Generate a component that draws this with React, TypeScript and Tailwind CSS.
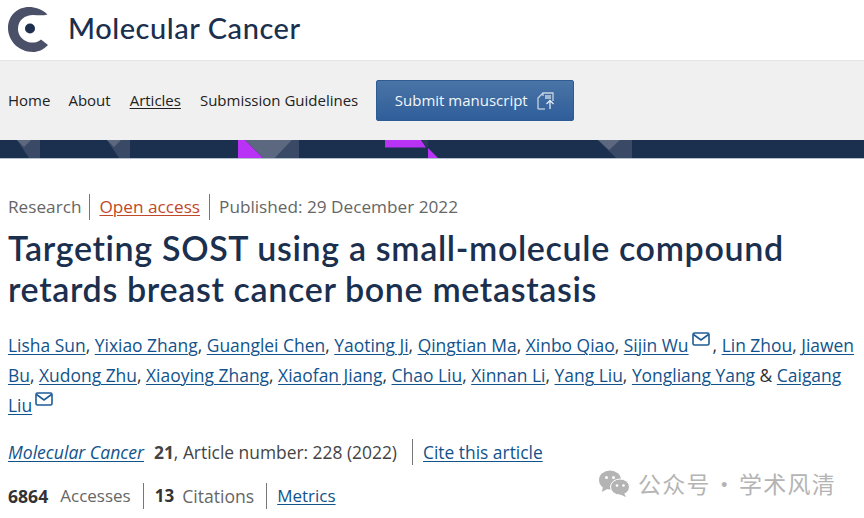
const body = { fontFamily: '"Open Sans", "Liberation Sans", sans-serif' };

function Logo() {
  return (
    <svg width="42" height="48" viewBox="7 4 42 48" className="shrink-0">
      <path d="M47.5 12.5 C42 7 35 5 29 5 C17 5 8 14 8 26 C8 39 19 50 33 50 C38 50 43 48 48 43 L41 37.5 C37 41 32 41 28 40 C22 38 18 33 18 27 C18 18 25 13 33 13 C38 13 42 14 47.5 12.5 Z" fill="#4a5068" />
      <circle cx="30" cy="26.5" r="5" fill="#1f2f4f" />
    </svg>
  );
}

function BandPattern() {
  return (
    <svg width="864" height="19" viewBox="0 0 864 19" className="block">
      <rect width="864" height="18" fill="#1b2f4f" />
      <rect y="18" width="864" height="1" fill="#b4c0d0" />
      <polygon points="17,0 31,0 40,0 40,18 29,18" fill="#3a4a66" />
      <polygon points="17,0 31,0 24,7" fill="#5c6880" />
      <polygon points="107,0 121,0 130,0 130,18 119,18" fill="#3a4a66" />
      <polygon points="107,0 121,0 114,7" fill="#5c6880" />
      <polygon points="292,0 299,0 299,18 275,18" fill="#3a4a66" />
      <polygon points="245,0 292,0 275,18 263,18" fill="#5c6880" />
      <polygon points="238,0 245,0 263,18 238,18" fill="#b833f5" />
      <polygon points="385,0 421,0 426,7.5 385,7.5" fill="#b833f5" />
      <polygon points="421,0 428,0 428,8" fill="#2a3a58" />
      <polygon points="428,8 438,18 428,18" fill="#b833f5" />
      <polygon points="598,0 632,0 632,18 616,18" fill="#3a4a66" />
      <polygon points="598,0 620,0 609,10" fill="#5c6880" />
    </svg>
  );
}

function SubmitIcon() {
  return (
    <svg width="20" height="20" viewBox="0 0 20 20" fill="none" stroke="#c6d3e4" strokeWidth="1.3" className="ml-2">
      <path d="M2 18 V7 L7 2 H17 V10" />
      <path d="M7 2 V5 M9 5 H15 M9 7 H15" />
      <path d="M2 18 H9" />
      <path d="M14 18 V10 M10.5 13 L14 9.5 L17.5 13" stroke="#e4ebf4" />
    </svg>
  );
}

function Mail() {
  return (
    <svg width="18" height="14" viewBox="0 0 18 14" fill="none" stroke="#1f5c96" strokeWidth="1.6" className="inline-block align-[6px] mx-[3px]">
      <rect x="1" y="1" width="16" height="12" rx="1.5" />
      <path d="M1.5 2.5 L9 8 L16.5 2.5" />
    </svg>
  );
}

function Author({ name }: { name: string }) {
  return <a className="text-[#11538c] underline underline-offset-2 decoration-1">{name}</a>;
}

function WeChat() {
  return (
    <svg width="32" height="28" viewBox="0 0 32 28" className="mr-[8px]">
      <ellipse cx="12" cy="11" rx="11" ry="9.5" fill="#b4b4b4" />
      <polygon points="5,17 4,23 11,19" fill="#b4b4b4" />
      <circle cx="8.5" cy="8.5" r="1.5" fill="#fff" />
      <circle cx="15.5" cy="8.5" r="1.5" fill="#fff" />
      <ellipse cx="22" cy="18" rx="9.5" ry="8" fill="#b4b4b4" stroke="#fff" strokeWidth="1" />
      <polygon points="26,24 28,28 21,25" fill="#b4b4b4" />
      <circle cx="19" cy="16.5" r="1.3" fill="#fff" />
      <circle cx="25.5" cy="16.5" r="1.3" fill="#fff" />
    </svg>
  );
}

export default function App() {
  return (
    <div className="relative w-[864px] h-[518px] overflow-hidden bg-white" style={body}>
      {/* Journal header */}
      <div className="h-[60px] flex items-center pl-[7px] gap-[19px]">
        <Logo />
        <span className="text-[29px] font-medium text-[#1b2f4f] tracking-[0.55px] -mt-[4px]" style={{ fontFamily: 'Lato, sans-serif' }}>
          Molecular Cancer
        </span>
      </div>

      {/* Nav */}
      <div className="h-[80px] bg-[#f0f0f0] border-t border-[#e6e6e6] flex items-center pl-[8px] text-[15px] text-[#222]">
        <span className="mr-[18px]">Home</span>
        <span className="mr-[19px]">About</span>
        <span className="mr-[19px] underline underline-offset-2">Articles</span>
        <span className="mr-[18px]">Submission Guidelines</span>
        <button className="w-[198px] h-[41px] rounded-[2px] border border-[#2d5c94] bg-gradient-to-b from-[#4a74a6] to-[#2f5e9a] text-[#f2f6fb] text-[15px] flex items-center justify-center">
          Submit manuscript
          <SubmitIcon />
        </button>
      </div>

      <BandPattern />

      {/* Article */}
      <div className="px-[8px] pt-[36px]">
        <div className="flex items-center text-[17.2px] text-[#666] h-[24px]">
          <span className="pr-[8px] border-r border-[#777]">Research</span>
          <span className="px-[9px] border-r border-[#777] text-[#c0492a] underline underline-offset-2">Open access</span>
          <span className="pl-[9px]">Published: 29 December 2022</span>
        </div>
        <h1 className="mt-[8px] text-[34px] leading-[41px] font-semibold text-[#1b2f4f] tracking-[0.65px]" style={{ fontFamily: 'Lato, sans-serif' }}>
          Targeting SOST using a small-molecule compound
          <br />
          retards breast cancer bone metastasis
        </h1>
        <div className="mt-[21px] w-[850px] text-[17.45px] leading-[30px] text-[#333]">
          <Author name="Lisha Sun" />, <Author name="Yixiao Zhang" />, <Author name="Guanglei Chen" />, <Author name="Yaoting Ji" />, <Author name="Qingtian Ma" />, <Author name="Xinbo Qiao" />, <Author name="Sijin Wu" /><Mail />, <Author name="Lin Zhou" />, <Author name="Jiawen Bu" />, <Author name="Xudong Zhu" />, <Author name="Xiaoying Zhang" />, <Author name="Xiaofan Jiang" />, <Author name="Chao Liu" />, <Author name="Xinnan Li" />, <Author name="Yang Liu" />, <Author name="Yongliang Yang" /> &amp; <Author name="Caigang Liu" /><Mail />
        </div>
        <div className="mt-[20px] flex items-center text-[17.4px] text-[#444] h-[24px]">
          <a className="italic text-[17.6px] text-[#11538c] underline underline-offset-2">Molecular Cancer</a>
          <span className="ml-[10px] font-bold">21</span>
          <span className="pr-[15px] border-r border-[#777]">, Article number: 228 (2022)</span>
          <a className="ml-[10px] text-[#11538c] underline underline-offset-2">Cite this article</a>
        </div>
        <div className="mt-[20px] flex items-center text-[17px] text-[#666] h-[24px]">
          <span className="font-bold text-[17.6px] text-[#333]">6864</span>
          <span className="ml-[12px] pr-[12px] border-r border-[#777]">Accesses</span>
          <span className="ml-[11px] font-bold text-[#333]">13</span>
          <span className="ml-[8px] pr-[12px] border-r border-[#777] text-[17.6px]">Citations</span>
          <a className="ml-[10px] text-[#11538c] underline underline-offset-2">Metrics</a>
        </div>
      </div>

      {/* Watermark */}
      <div className="absolute left-[598px] top-[466px] flex items-center text-[23px] text-[#b4b4b4] tracking-[1.3px]" style={{ fontFamily: '"Noto Sans CJK SC", sans-serif' }}>
        <WeChat />
        <span>公众号</span>
        <span className="w-[28px] text-center">·</span>
        <span>学术风清</span>
      </div>
    </div>
  );
}
